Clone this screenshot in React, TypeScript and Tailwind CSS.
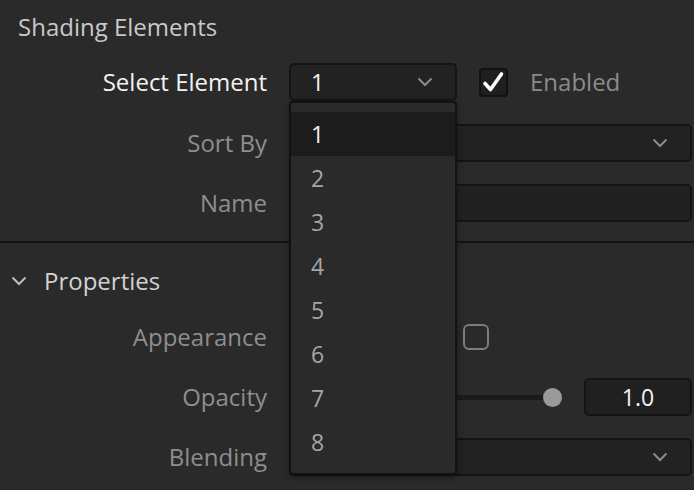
import React from 'react';

const font = { fontFamily: '"Open Sans", "Noto Sans", sans-serif' };

function Chevron({ className = '' }: { className?: string }) {
  return (
    <svg width="16" height="10" viewBox="0 0 16 10" className={className}>
      <polyline points="1.5,1.5 8,8 14.5,1.5" fill="none" stroke="currentColor" strokeWidth="2" />
    </svg>
  );
}

function Label({ children, strong }: { children: React.ReactNode; strong?: boolean }) {
  return (
    <div className={`w-[267px] shrink-0 text-right text-[24px] ${strong ? 'text-[#f2f2f2]' : 'text-[#8e8e8e]'}`}>
      {children}
    </div>
  );
}

function SelectBox({ value, className = '' }: { value?: string; className?: string }) {
  return (
    <div
      className={`h-[38px] flex items-center justify-between rounded-[5px] border-2 border-[#141414] bg-[#222222] pl-[20px] pr-[22px] ${className}`}
    >
      <span className="text-[23px] text-[#f2f2f2]">{value}</span>
      <Chevron className="text-[#8c8c8c]" />
    </div>
  );
}

const items = ['1', '2', '3', '4', '5', '6', '7', '8'];

export default function App() {
  return (
    <div className="relative w-[694px] h-[490px] overflow-hidden bg-[#2a2a2a]" style={font}>
      <div className="h-[54px] flex items-center pl-[18px] text-[24px] text-[#c9c9c9]">Shading Elements</div>

      <div className="h-[56px] flex items-center gap-[22px]">
        <Label strong>Select Element</Label>
        <SelectBox value="1" className="w-[168px]" />
        <div className="w-[29px] h-[29px] flex items-center justify-center rounded-[4px] border-2 border-[#121212] bg-[#1f1f1f]">
          <svg width="23" height="22" viewBox="0 0 23 22">
            <path d="M3 12.5 L8.5 18.5 L19.5 3" fill="none" stroke="#ffffff" strokeWidth="3.6" strokeLinejoin="round" strokeLinecap="round" />
          </svg>
        </div>
        <span className="text-[24px] text-[#8a8a8a]">Enabled</span>
      </div>

      <div className="h-[66px] flex items-center gap-[22px] pr-[2px]">
        <Label>Sort By</Label>
        <SelectBox className="flex-1" />
      </div>

      <div className="h-[54px] flex items-center gap-[22px] pr-[2px]">
        <Label>Name</Label>
        <div className="flex-1 h-[38px] rounded-[5px] border-2 border-[#141414] bg-[#212121]" />
      </div>

      <div className="mt-[11px] h-[2px] bg-[#121212]" />

      <div className="h-[76px] flex items-center pl-[11px] gap-[17px] text-[24px] text-[#d2d2d2]">
        <Chevron className="text-[#bdbdbd]" />
        <span>Properties</span>
      </div>

      <div className="h-[36px] flex items-center gap-[22px]">
        <Label>Appearance</Label>
        <div className="ml-[174px] w-[26px] h-[26px] rounded-[6px] border-2 border-[#7c7c7c]" />
      </div>

      <div className="h-[84px] flex items-center gap-[22px] pr-[2px]">
        <Label>Opacity</Label>
        <div className="flex-1 flex items-center">
          <div className="flex-1 h-[5px] rounded-full bg-[#1a1a1a]" />
          <div className="-ml-[2px] w-[19px] h-[19px] rounded-full bg-[#9a9a9a]" />
        </div>
        <div className="w-[108px] h-[38px] flex items-center justify-center rounded-[5px] border-2 border-[#141414] bg-[#202020] text-[23px] text-[#f2f2f2]">
          1.0
        </div>
      </div>

      <div className="h-[36px] flex items-center gap-[22px] pr-[2px]">
        <Label>Blending</Label>
        <SelectBox className="flex-1" />
      </div>

      <div className="absolute left-[289px] top-[101px] w-[168px] h-[374px] rounded-[4px] border-2 border-[#121212] bg-[#2a2a2a] pt-[9px] shadow-[0_2px_6px_rgba(0,0,0,0.4)]">
        {items.map((n, i) => (
          <div
            key={n}
            className={`h-[44px] flex items-center pl-[20px] text-[23px] ${
              i === 0 ? 'bg-[#1c1c1c] text-[#f2f2f2]' : 'text-[#a5a5a5]'
            }`}
          >
            {n}
          </div>
        ))}
      </div>
    </div>
  );
}
